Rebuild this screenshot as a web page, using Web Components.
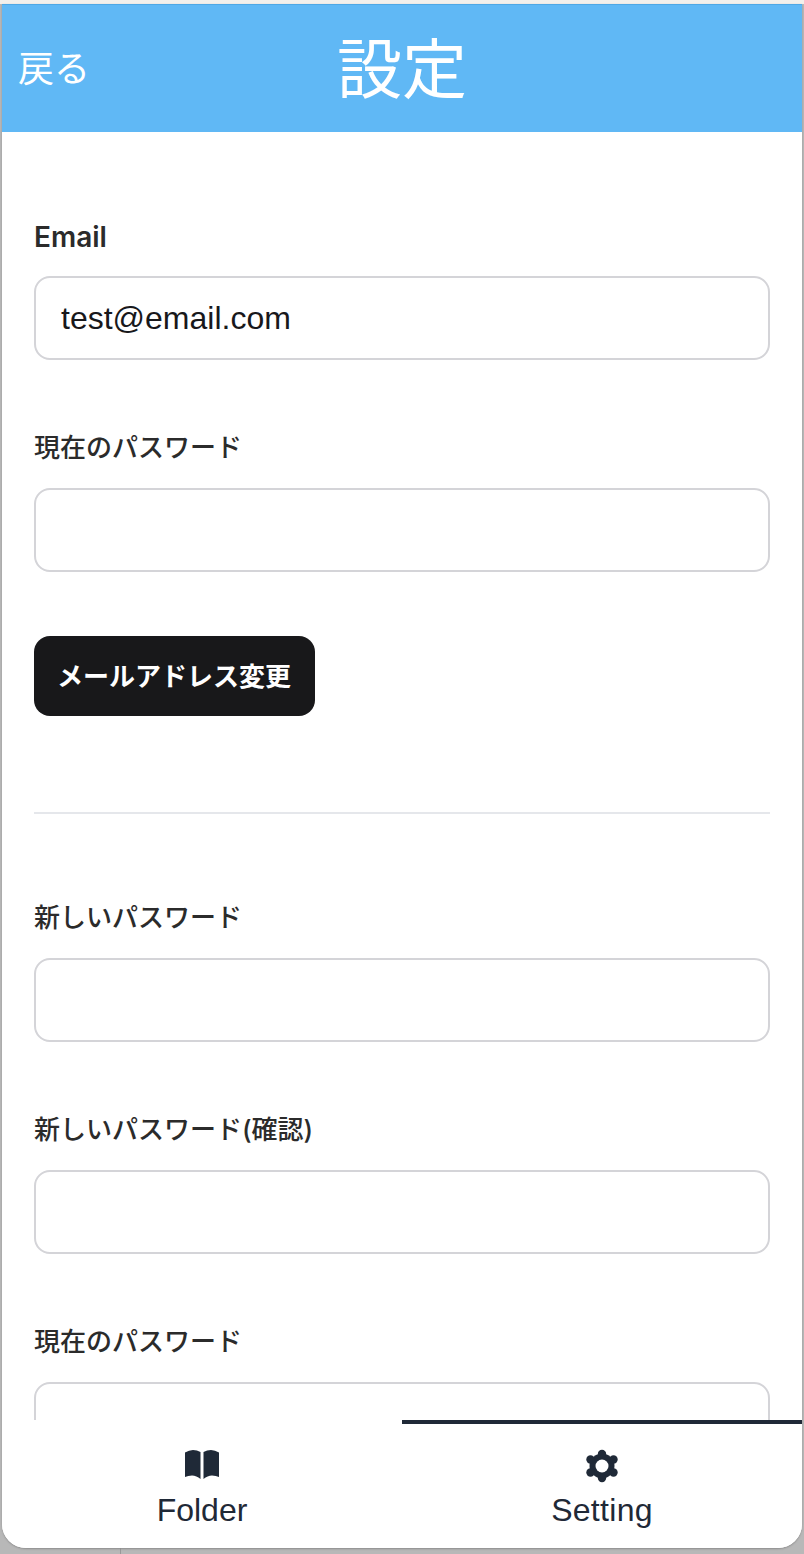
<!DOCTYPE html>
<html lang="ja">
<head>
<meta charset="utf-8">
<title>設定</title>
<style>
  html, body { margin: 0; height: 100%; }
  body {
    background:
      linear-gradient(#f3f0ec 0, #f3f0ec 4px, transparent 4px),
      linear-gradient(90deg, transparent 120px, #999 120px, #999 121px, transparent 121px) 0 1548px / 100% 6px no-repeat,
      #b8b8b8;
    font-family: Inter, "Noto Sans CJK JP", sans-serif;
    overflow: hidden;
  }
</style>
</head>
<body>
<settings-app>
  <app-header slot="header" back="戻る">設定</app-header>
  <text-field label="Email" latin>test@email.com</text-field>
  <text-field label="現在のパスワード"></text-field>
  <action-button>メールアドレス変更</action-button>
  <hr-line></hr-line>
  <text-field label="新しいパスワード"></text-field>
  <text-field label="新しいパスワード(確認)"></text-field>
  <text-field label="現在のパスワード"></text-field>
  <tab-bar slot="footer"></tab-bar>
</settings-app>

<script>
class SettingsApp extends HTMLElement {
  constructor() {
    super();
    const shadow = this.attachShadow({mode: 'open'});
    shadow.innerHTML = `
      <style>
        :host {
          display: flex;
          flex-direction: column;
          box-sizing: border-box;
          width: 800px;
          height: 1544px;
          margin: 4px 2px 0;
          background: #fff;
          border-radius: 0 0 24px 24px;
          box-shadow: 0 1px 2px #8c8c8c;
          overflow: hidden;
        }
        main {
          flex: 1;
          min-height: 0;
          overflow: hidden;
          padding: 84px 32px 0;
        }
      </style>
      <slot name="header"></slot>
      <main><slot></slot></main>
      <slot name="footer"></slot>
    `;
  }
}

// blue title bar
class AppHeader extends HTMLElement {
  constructor() {
    super();
    const shadow = this.attachShadow({mode: 'open'});
    shadow.innerHTML = `
      <style>
        :host {
          display: grid;
          grid-template-columns: 1fr auto 1fr;
          align-items: center;
          box-sizing: border-box;
          height: 128px;
          padding-bottom: 6px;
          flex: none;
          background: #60b8f5;
          border-top: 1px solid #4fa8e6;
          color: #fff;
          font-family: "Noto Sans CJK JP", sans-serif;
        }
        .back { font-size: 36px; padding-left: 16px; line-height: 1; }
        .title { font-size: 65px; line-height: 1; }
      </style>
      <span class="back"></span>
      <span class="title"><slot></slot></span>
    `;
    shadow.querySelector('.back').textContent = this.getAttribute('back');
  }
}

// label + rounded input box
class TextField extends HTMLElement {
  constructor() {
    super();
    const shadow = this.attachShadow({mode: 'open'});
    shadow.innerHTML = `
      <style>
        :host {
          display: block;
          margin-bottom: 68px;
        }
        label {
          display: block;
          font-size: 26px;
          font-weight: 500;
          line-height: 40px;
          margin-bottom: 20px;
          color: #2b2b2b;
        }
        :host([latin]) label {
          font-size: 28px;
          font-weight: 600;
          padding-top: 1px;
          margin-bottom: 19px;
        }
        .box {
          box-sizing: border-box;
          height: 84px;
          padding: 0 25px;
          display: flex;
          align-items: center;
          border: 2px solid #d4d4d8;
          border-radius: 16px;
          font-family: "Liberation Sans", sans-serif;
          font-size: 32px;
          color: #18181b;
        }
      </style>
      <label></label>
      <div class="box"><slot></slot></div>
    `;
    shadow.querySelector('label').textContent = this.getAttribute('label');
  }
}

class ActionButton extends HTMLElement {
  constructor() {
    super();
    const shadow = this.attachShadow({mode: 'open'});
    shadow.innerHTML = `
      <style>
        :host {
          display: inline-flex;
          align-items: center;
          box-sizing: border-box;
          height: 80px;
          padding: 0 24px 3px 23px;
          margin-top: -4px;
          background: #18181a;
          color: #fff;
          border-radius: 16px;
          font-size: 26px;
          font-weight: 600;
        }
      </style>
      <slot></slot>
    `;
  }
}

class HrLine extends HTMLElement {
  constructor() {
    super();
    const shadow = this.attachShadow({mode: 'open'});
    shadow.innerHTML = `
      <style>
        :host {
          display: block;
          height: 2px;
          background: #e5e7eb;
          margin: 96px 0 84px;
        }
      </style>
    `;
  }
}

// bottom navigation, second tab is active
class TabBar extends HTMLElement {
  constructor() {
    super();
    const shadow = this.attachShadow({mode: 'open'});
    shadow.innerHTML = `
      <style>
        :host {
          display: grid;
          grid-template-columns: 1fr 1fr;
          flex: none;
          height: 128px;
          background: #fff;
          color: #1f2937;
          font-family: "Liberation Sans", sans-serif;
          font-size: 32px;
        }
        .tab {
          display: flex;
          flex-direction: column;
          align-items: center;
          box-sizing: border-box;
          border-top: 4px solid transparent;
          padding-top: 22px;
        }
        .tab.active { border-top-color: #1f2937; }
        svg { width: 40px; height: 40px; fill: currentColor; display: block; }
        span { line-height: 44px; margin-top: 2px; }
      </style>
      <div class="tab">
        <svg viewBox="-3 -4 40 40"><path d="M0 2.500Q4 0 8 0q4 0 7.500 2V29Q11.500 25.500 7 25.500 3 25.500 0 27zM34 2.500Q30 0 26 0q-4 0-7.500 2V29Q22.500 25.500 27 25.500q4 0 7 1.500z"/></svg>
        <span>Folder</span>
      </div>
      <div class="tab active">
        <svg viewBox="-20 -20 40 40">
          <mask id="hole"><rect x="-20" y="-20" width="40" height="40" fill="#fff"/><circle r="6.500" fill="#000"/></mask>
          <g mask="url(#hole)">
            <circle r="12.500"/>
            <circle cy="-12" r="4.200"/><circle cy="12" r="4.200"/>
            <circle cx="-11.500" cy="-6.500" r="4.200"/><circle cx="11.500" cy="-6.500" r="4.200"/>
            <circle cx="-11.500" cy="6.500" r="4.200"/><circle cx="11.500" cy="6.500" r="4.200"/>
          </g>
        </svg>
        <span style="letter-spacing:.3px">Setting</span>
      </div>
    `;
  }
}

customElements.define('settings-app', SettingsApp);
customElements.define('app-header', AppHeader);
customElements.define('text-field', TextField);
customElements.define('action-button', ActionButton);
customElements.define('hr-line', HrLine);
customElements.define('tab-bar', TabBar);
</script>
</body>
</html>
